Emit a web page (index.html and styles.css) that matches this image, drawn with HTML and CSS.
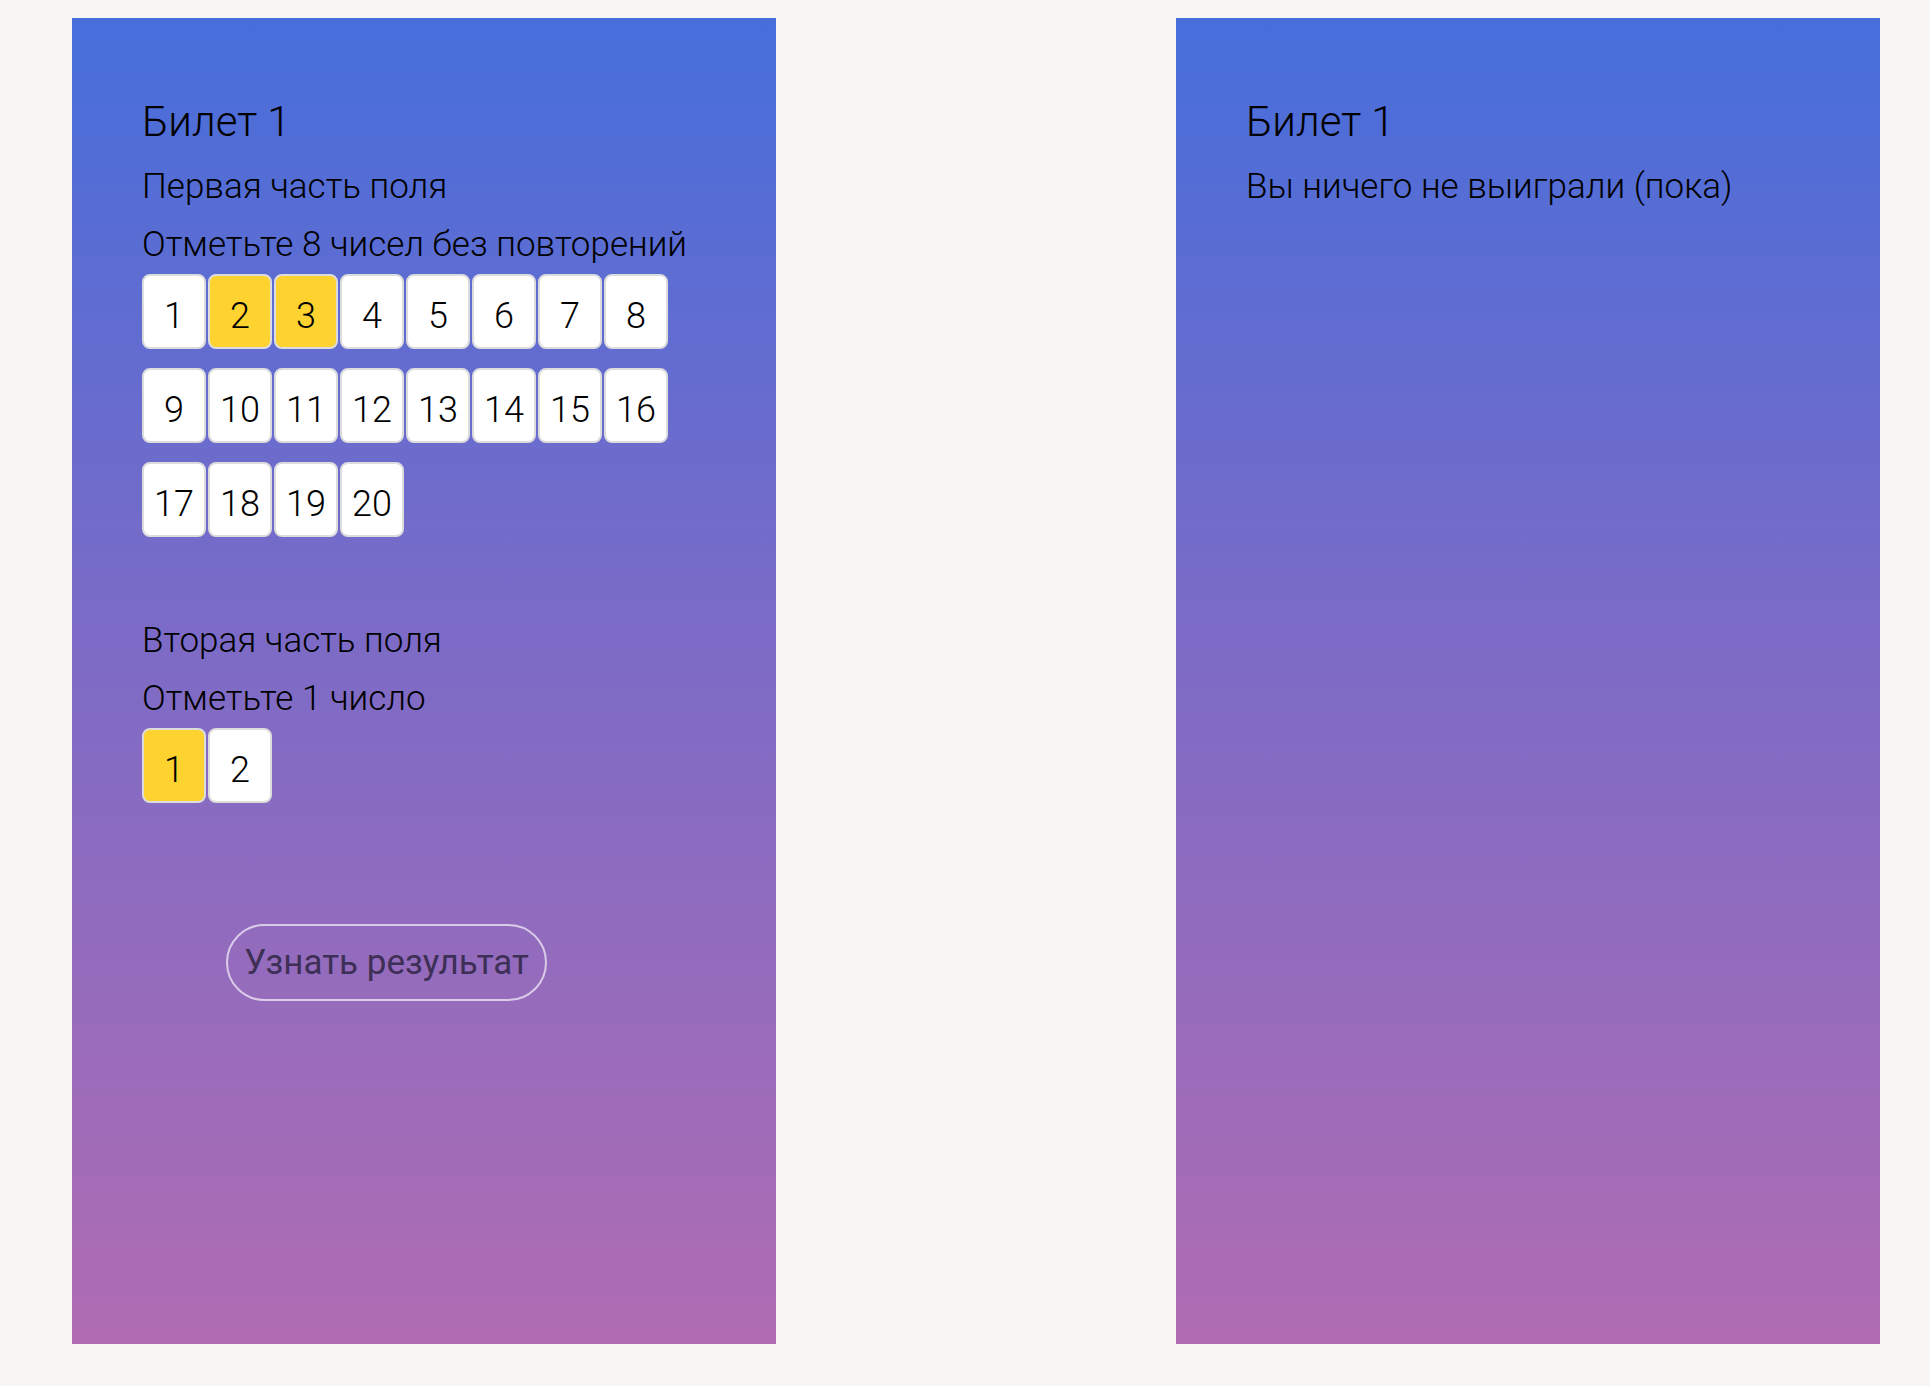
FILE: index.html
```html
<!DOCTYPE html>
<html lang="ru">
<head>
<meta charset="utf-8">
<title>Билет</title>
<link rel="stylesheet" href="styles.css">
</head>
<body>
<div class="page">
  <section class="ticket">
    <h1 class="ticket-title">Билет 1</h1>
    <p class="line line-first">Первая часть поля</p>
    <p class="line">Отметьте 8 чисел без повторений</p>
    <div class="numbers">
      <div class="row">
        <span class="cell">1</span>
        <span class="cell cell-on">2</span>
        <span class="cell cell-on">3</span>
        <span class="cell">4</span>
        <span class="cell">5</span>
        <span class="cell">6</span>
        <span class="cell">7</span>
        <span class="cell">8</span>
      </div>
      <div class="row">
        <span class="cell">9</span>
        <span class="cell">10</span>
        <span class="cell">11</span>
        <span class="cell">12</span>
        <span class="cell">13</span>
        <span class="cell">14</span>
        <span class="cell">15</span>
        <span class="cell">16</span>
      </div>
      <div class="row">
        <span class="cell">17</span>
        <span class="cell">18</span>
        <span class="cell">19</span>
        <span class="cell">20</span>
      </div>
    </div>
    <p class="line line-second">Вторая часть поля</p>
    <p class="line">Отметьте 1 число</p>
    <div class="numbers">
      <div class="row">
        <span class="cell cell-on">1</span>
        <span class="cell">2</span>
      </div>
    </div>
    <button class="result-btn" type="button">Узнать результат</button>
  </section>
  <section class="ticket">
    <h1 class="ticket-title">Билет 1</h1>
    <p class="line line-first">Вы ничего не выиграли (пока)</p>
  </section>
</div>
</body>
</html>
```

FILE: styles.css
```css
* { box-sizing: border-box; }

html, body {
  margin: 0;
  padding: 0;
  background: #f7f6f4;
}

body {
  font-family: Roboto, "Liberation Sans", sans-serif;
  font-weight: 300;
  color: #000;
}

.page {
  display: flex;
  gap: 400px;
  padding: 18px 0 42px 72px;
}

.ticket {
  width: 704px;
  height: 1326px;
  padding: 73px 40px 0 70px;
  background: linear-gradient(to bottom, #466edb 0%, #7a6bc7 45%, #b06cb2 100%);
}

.ticket-title {
  margin: 0;
  font-size: 42px;
  line-height: 62px;
  font-weight: 300;
}

.line {
  margin: 0;
  font-size: 35px;
  line-height: 58px;
}

.line-first { margin-top: 5px; }
.line-second { margin-top: 75px; }

.numbers {
  display: flex;
  flex-direction: column;
  gap: 19px;
}

.row {
  display: flex;
  gap: 2px;
}

.cell {
  width: 64px;
  height: 75px;
  display: flex;
  align-items: center;
  justify-content: center;
  padding-top: 8px;
  background: #fff;
  border: 2px solid #dcdcdc;
  border-radius: 8px;
  font-size: 36px;
  font-weight: 300;
}

.cell-on {
  background: #fed330;
}

.result-btn {
  display: block;
  margin: 121px 0 0 84px;
  width: 321px;
  height: 77px;
  padding: 0;
  background: transparent;
  border: 2px solid rgba(255, 255, 255, 0.65);
  border-radius: 40px;
  font-family: Roboto, "Liberation Sans", sans-serif;
  font-weight: 400;
  font-size: 35px;
  color: #3e2f57;
}
```
